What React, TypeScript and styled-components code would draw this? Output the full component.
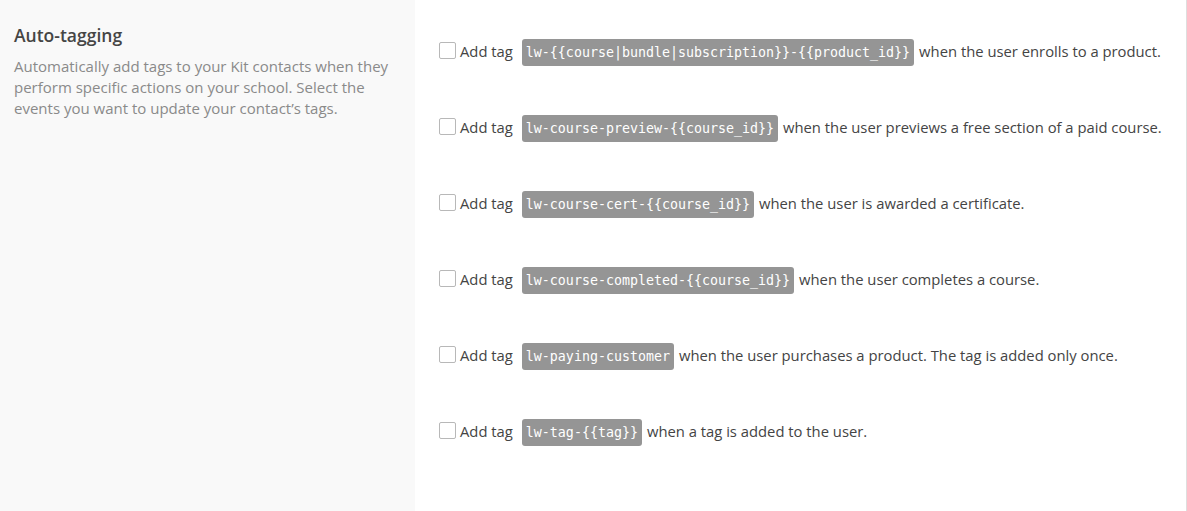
import React from "react";
import styled, { createGlobalStyle } from "styled-components";

const GlobalStyle = createGlobalStyle`
  html, body {
    margin: 0;
    padding: 0;
    background: #fff;
  }
  body {
    font-family: "Open Sans", "Noto Sans", sans-serif;
  }
`;

type TagRule = {
  tag: string;
  text: string;
};

const rules: TagRule[] = [
  {
    tag: "lw-{{course|bundle|subscription}}-{{product_id}}",
    text: "when the user enrolls to a product.",
  },
  {
    tag: "lw-course-preview-{{course_id}}",
    text: "when the user previews a free section of a paid course.",
  },
  {
    tag: "lw-course-cert-{{course_id}}",
    text: "when the user is awarded a certificate.",
  },
  {
    tag: "lw-course-completed-{{course_id}}",
    text: "when the user completes a course.",
  },
  {
    tag: "lw-paying-customer",
    text: "when the user purchases a product. The tag is added only once.",
  },
  {
    tag: "lw-tag-{{tag}}",
    text: "when a tag is added to the user.",
  },
];

const App: React.FC = () => {
  return (
    <>
      <GlobalStyle />
      <Section>
        <Aside>
          <Title>Auto-tagging</Title>
          <Description>
            Automatically add tags to your Kit contacts when they perform
            specific actions on your school. Select the events you want to
            update your contact’s tags.
          </Description>
        </Aside>
        <Options>
          {rules.map((r) => (
            <Option key={r.tag}>
              <Check type="checkbox" />
              <Text>Add tag</Text>
              <Tag>{r.tag}</Tag>
              <Text>{r.text}</Text>
            </Option>
          ))}
        </Options>
      </Section>
    </>
  );
};

export default App;

const Section = styled.div`
  display: flex;
  width: 1186px;
  height: 511px;
  border-right: 1px solid #dedede;
`;

const Aside = styled.div`
  width: 387px;
  flex-shrink: 0;
  background: #f9f9f9;
  padding: 24px 14px 0 14px;
`;

const Title = styled.h3`
  margin: 0 0 10px;
  font-size: 17.5px;
  font-weight: 600;
  color: #454545;
  line-height: 22px;
`;

const Description = styled.p`
  margin: 0;
  font-size: 15px;
  line-height: 21px;
  color: #8a8a8a;
  padding-right: 8px;
`;

const Options = styled.div`
  display: flex;
  flex-direction: column;
  gap: 49px;
  padding: 39px 0 0 24px;
`;

const Option = styled.label`
  display: flex;
  align-items: center;
  height: 27px;
  font-size: 14.8px;
  color: #444;
  white-space: nowrap;
`;

const Text = styled.span`
  margin-bottom: 3px;
`;

const Check = styled.input`
  appearance: none;
  width: 17px;
  height: 17px;
  margin: 0 4px 4px 0;
  border: 1px solid #b8b8b8;
  border-radius: 2px;
  background: #fff;
  box-sizing: border-box;
`;

const Tag = styled.code`
  display: inline-flex;
  align-items: center;
  height: 27px;
  margin: 0 5px 0 9px;
  padding: 0 4px;
  border-radius: 3px;
  background: #959595;
  color: #fff;
  font-family: "DejaVu Sans Mono", "Liberation Mono", monospace;
  font-size: 13.3px;
  font-weight: 400;
`;
